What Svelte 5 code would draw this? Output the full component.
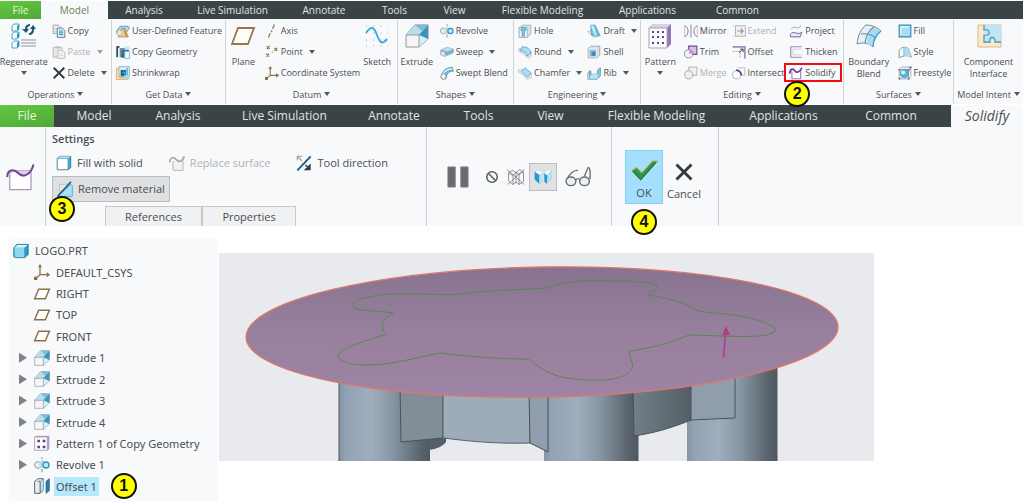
<script lang="ts">
	type Item = { label: string; icon: string; arrow?: boolean; disabled?: boolean; marked?: boolean };
	type Column = { size: number; large?: boolean; items: Item[] };
	type Group = { title: string; size: number; columns: Column[] };

	const mainTabs = [
		{ label: 'File', size: 41 },
		{ label: 'Model', size: 67 },
		{ label: 'Analysis', size: 72 },
		{ label: 'Live Simulation', size: 105 },
		{ label: 'Annotate', size: 78 },
		{ label: 'Tools', size: 63 },
		{ label: 'View', size: 57 },
		{ label: 'Flexible Modeling', size: 119 },
		{ label: 'Applications', size: 91 },
		{ label: 'Common', size: 89 },
		{ label: '', size: 241 }
	];

	const toolTabs = [
		{ label: 'File', size: 54 },
		{ label: 'Model', size: 80 },
		{ label: 'Analysis', size: 88 },
		{ label: 'Live Simulation', size: 125 },
		{ label: 'Annotate', size: 94 },
		{ label: 'Tools', size: 75 },
		{ label: 'View', size: 69 },
		{ label: 'Flexible Modeling', size: 143 },
		{ label: 'Applications', size: 111 },
		{ label: 'Common', size: 104 },
		{ label: 'Solidify', size: 80 }
	];

	const groups: Group[] = [
		{
			title: 'Operations', size: 112,
			columns: [
				{ size: 48, large: true, items: [{ label: 'Regenerate', icon: 'regenerate', arrow: true }] },
				{ size: 64, items: [
					{ label: 'Copy', icon: 'copy' },
					{ label: 'Paste', icon: 'paste', arrow: true, disabled: true },
					{ label: 'Delete', icon: 'cross', arrow: true }
				] }
			]
		},
		{
			title: 'Get Data', size: 114,
			columns: [
				{ size: 114, items: [
					{ label: 'User-Defined Feature', icon: 'udf' },
					{ label: 'Copy Geometry', icon: 'copyGeometry' },
					{ label: 'Shrinkwrap', icon: 'shrinkwrap' }
				] }
			]
		},
		{
			title: 'Datum', size: 172,
			columns: [
				{ size: 35, large: true, items: [{ label: 'Plane', icon: 'plane' }] },
				{ size: 97, items: [
					{ label: 'Axis', icon: 'axis' },
					{ label: 'Point', icon: 'point', arrow: true },
					{ label: 'Coordinate System', icon: 'csys' }
				] },
				{ size: 40, large: true, items: [{ label: 'Sketch', icon: 'sketch' }] }
			]
		},
		{
			title: 'Shapes', size: 116,
			columns: [
				{ size: 38, large: true, items: [{ label: 'Extrude', icon: 'extrude' }] },
				{ size: 78, items: [
					{ label: 'Revolve', icon: 'revolve' },
					{ label: 'Sweep', icon: 'sweep', arrow: true },
					{ label: 'Swept Blend', icon: 'sweptBlend' }
				] }
			]
		},
		{
			title: 'Engineering', size: 127,
			columns: [
				{ size: 70, items: [
					{ label: 'Hole', icon: 'hole' },
					{ label: 'Round', icon: 'round', arrow: true },
					{ label: 'Chamfer', icon: 'chamfer', arrow: true }
				] },
				{ size: 57, items: [
					{ label: 'Draft', icon: 'draft', arrow: true },
					{ label: 'Shell', icon: 'shell' },
					{ label: 'Rib', icon: 'rib', arrow: true }
				] }
			]
		},
		{
			title: 'Editing', size: 203,
			columns: [
				{ size: 39, large: true, items: [{ label: 'Pattern', icon: 'pattern', arrow: true }] },
				{ size: 48, items: [
					{ label: 'Mirror', icon: 'mirror' },
					{ label: 'Trim', icon: 'trim' },
					{ label: 'Merge', icon: 'merge', disabled: true }
				] },
				{ size: 58, items: [
					{ label: 'Extend', icon: 'extend', disabled: true },
					{ label: 'Offset', icon: 'offset' },
					{ label: 'Intersect', icon: 'intersect' }
				] },
				{ size: 58, items: [
					{ label: 'Project', icon: 'project' },
					{ label: 'Thicken', icon: 'thicken' },
					{ label: 'Solidify', icon: 'solidify', marked: true }
				] }
			]
		},
		{
			title: 'Surfaces', size: 110,
			columns: [
				{ size: 50, large: true, items: [{ label: 'Boundary Blend', icon: 'boundary' }] },
				{ size: 60, items: [
					{ label: 'Fill', icon: 'fill' },
					{ label: 'Style', icon: 'style' },
					{ label: 'Freestyle', icon: 'freestyle' }
				] }
			]
		},
		{
			title: 'Model Intent', size: 69,
			columns: [
				{ size: 69, large: true, items: [{ label: 'Component Interface', icon: 'component' }] }
			]
		}
	];

	const tree = [
		{ label: 'DEFAULT_CSYS', icon: 'csys' },
		{ label: 'RIGHT', icon: 'planeSmall' },
		{ label: 'TOP', icon: 'planeSmall' },
		{ label: 'FRONT', icon: 'planeSmall' },
		{ label: 'Extrude 1', icon: 'extrude', open: true },
		{ label: 'Extrude 2', icon: 'extrude', open: true },
		{ label: 'Extrude 3', icon: 'extrude', open: true },
		{ label: 'Extrude 4', icon: 'extrude', open: true },
		{ label: 'Pattern 1 of Copy Geometry', icon: 'patternSmall', open: true },
		{ label: 'Revolve 1', icon: 'revolve', open: true },
		{ label: 'Offset 1', icon: 'offsetFeature', selected: true }
	];

	// every icon is drawn on a 24x24 grid
	const icons: Record<string, string> = {
		regenerate: '<g fill="#f4fcff" stroke="#4aa6c8"><path d="M0 2l2-2h5v5l-2 2H0zM0 10l2-2h5v5l-2 2H0zM0 19l2-2h5v5l-2 2H0z"/></g><path d="M5 2v5l2-2V0zM5 10v5l2-2V8zM5 19v5l2-2v-5z" fill="#3995bb"/><path d="M9 16h15M9 19h15M9 22h15" stroke="#8f9295" stroke-width="1.2"/><g fill="none" stroke="#1d5673" stroke-width="2.2"><path d="M18 1c-3 0-4 2-4 5M17 10c3 0 4-2 4-5"/></g><path d="M10 5h7l-3 4zM18 5l3-4 3 4z" fill="#1d5673"/>',
		copy: '<path d="M2 2h9l3 3v11H2z" fill="#f5f8fa" stroke="#8d979e" stroke-width="1.5"/><path d="M4 7h6M4 10h6M4 13h6" stroke="#aab3b9"/><path d="M9 7h9l4 4v12H9z" fill="#d8effa" stroke="#5e7f92" stroke-width="1.6"/><path d="M12 12h7M12 15h7M12 18h7" stroke="#3187b2" stroke-width="1.6"/>',
		paste: '<path d="M2 4h15v17H2z" fill="#e6e7e8" stroke="#b6b8ba" stroke-width="1.6"/><path d="M6 2h7v4H6z" fill="#bfc1c3"/><path d="M10 9h8l4 4v10H10z" fill="#f4f4f4" stroke="#b9bbbd" stroke-width="1.6"/><path d="M13 14h6M13 18h6" stroke="#c5c7c9"/>',
		cross: '<path d="M3 3l18 18M21 3L3 21" stroke="#35393c" stroke-width="3.4" fill="none"/>',
		udf: '<path d="M1 12l6-8h14l2 3-6 8H1z" fill="#a8daf1" stroke="#3f86aa" stroke-width="1.3"/><path d="M4 22l6-14h5l6 14z" fill="#f1d3a0" stroke="#ad7e3c" stroke-width="1.5"/><path d="M12 8l4 14h5l-6-14z" fill="#d29a4c"/><circle cx="6" cy="15" r="5" fill="#eee5d6" stroke="#9c968b"/>',
		copyGeometry: '<path d="M2 2v19M2 3h4" stroke="#24506b" stroke-width="3"/><path d="M7 6h8v14H7z" fill="#8fa0a9" stroke="#4d5d66"/><path d="M9 8h13v4h-6v10H9z" fill="#2f6d94"/><path d="M15 11h8v12h-8z" fill="#f8fbfd" stroke="#71b4d5" stroke-width="1.5"/><path d="M15 3h8v5h-8z" fill="#b9e5f7"/>',
		shrinkwrap: '<path d="M1 4h5v16h14v3H1z" fill="#fae8bf" stroke="#dda24c" stroke-width="1.5"/><path d="M5 1h18v17H5z" fill="#d5ecf5" stroke="#8ca6b3" stroke-width="1.3"/><path d="M8 7h9v10H8z" fill="#176390"/><path d="M11 11h4v4M19 4v12" stroke="#45a9d3" stroke-width="2.4" fill="none"/><path d="M14 16h9v7h-9z" fill="#9bdaf1"/>',
		plane: '<path d="M7 4h16l-6 16H1z" fill="#fffdf8" stroke="#957749" stroke-width="1.8"/>',
		planeSmall: '<path d="M7 5h16l-6 14H1z" fill="#fff" stroke="#8d704a" stroke-width="2.2"/>',
		axis: '<path d="M16 1l-3 7M12 11l-1 3M9 16l-3 7" stroke="#92754f" stroke-width="2.2" fill="none"/>',
		point: '<path d="M3 2l5 5M8 2L3 7M16 5l5 5M21 5l-5 5M2 15l5 5M7 15l-5 5M12 12l1 1" stroke="#92754f" stroke-width="2.2"/>',
		csys: '<path d="M9 2v14l-7 6M9 16h14" stroke="#927447" stroke-width="2" fill="none"/><path d="M6 5l3-5 3 5zM19 12l5 4-5 4zM0 19l5 0v5H0z" fill="#8a6d44"/>',
		sketch: '<path d="M1 2h22M1 9h22M1 16h22M1 22h22" stroke="#9b9da0" stroke-dasharray="1 6.2"/><path d="M1 9C6 1 9 3 12 11s5 10 10 4" stroke="#3aaee0" stroke-width="2" fill="none"/>',
		extrude: '<path d="M1 11L10 1h13v14L14 23z" fill="#9fcfe5" stroke="#78858d"/><path d="M10 1h13L14 11H1z" fill="#bdddea"/><path d="M23 1v14l-9 8V11z" fill="#67abcb"/><path d="M14 11l9-10v14z" fill="#3f92bb"/><path d="M14 23l9-8-9-4z" fill="#d3effa"/><path d="M10 1h13l-6 6z" fill="#7cbbd6"/><path d="M1 11h13v12H1z" fill="#f4f5f5" stroke="#929a9f"/>',
		revolve: '<path d="M12 0v3m0 2v4m0 2v5m0 2v5" stroke="#858c91" stroke-width="1.6"/><ellipse cx="6" cy="12" rx="5" ry="5" fill="#edf1f3" stroke="#8c989f" stroke-width="1.5"/><path d="M7 7c5 0 6-1 10-1v11c-4 0-5-1-10 0z" fill="#c2e2ef" opacity=".7"/><circle cx="18" cy="12" r="4.5" fill="#bbe9fb" stroke="#2f94c0" stroke-width="2"/>',
		sweep: '<path d="M2 8l10-4 11 3v6l-11 5-10-4z" fill="#75b5d1" stroke="#769aaa"/><path d="M2 8l10-4 11 3-10 4z" fill="#bcdbe7"/><path d="M1 10l8 2v8l-8-3z" fill="#dce3e6" stroke="#85939a"/>',
		sweptBlend: '<path d="M2 20C3 8 10 3 21 2l2 7C14 9 12 13 10 22z" fill="#73bddd" stroke="#43758e"/><path d="M5 14c4-7 9-9 16-9" stroke="#eefbff" stroke-width="2" fill="none"/><ellipse cx="6" cy="18" rx="4.5" ry="5" fill="#f2f4f5" stroke="#748087" stroke-width="1.4"/>',
		hole: '<path d="M2 6l7-4h13v15l-6 6H2z" fill="#cce6f0" stroke="#83939c"/><path d="M2 6h14v17H2z" fill="#f3f5f6" stroke="#839aa6"/><path d="M5 8c2-3 7-3 9 0v3h-3v10H7V11H5z" fill="#74c9ec" stroke="#398cad"/>',
		round: '<path d="M1 6h9l13 5v8l-6 4-7-7-9-5z" fill="#dce0e2" stroke="#b7bec2"/><path d="M7 3c9 0 15 4 15 11l-7 5c0-6-4-9-11-9z" fill="#a7def5" stroke="#519fc2" stroke-width="1.3"/>',
		chamfer: '<path d="M1 6h10l12 8v6l-8 3-6-7-8-5z" fill="#e0e4e6" stroke="#b7bec2"/><path d="M12 3l11 9-7 7L6 9z" fill="#a7def5" stroke="#519fc2" stroke-width="1.3"/>',
		draft: '<path d="M1 13l9-3 13 10-12 3z" fill="#e1e4e5" stroke="#a3acb1"/><path d="M6 2h8l8 17-5 2-9-2z" fill="#65c0e5" stroke="#4387a7"/><path d="M6 2l7 17 4 2-5-17z" fill="#c6eefc"/>',
		shell: '<path d="M2 6l5-4h15v15l-5 5H2z" fill="#d9e0e3" stroke="#8a969d" stroke-width="1.3"/><path d="M3 6h14v15H3z" fill="#eef1f2"/><path d="M5 9h10v10H5z" fill="#348db4" stroke="#9cbcc9"/><path d="M5 9h10l-3 3H8v7H5z" fill="#7bbddb"/>',
		rib: '<path d="M1 12l6-4v11h10v4H1z" fill="#dadfe1" stroke="#939da2"/><path d="M4 8l3 7 11-2V7l5-4v14l-5 5H4z" fill="#85cae7" stroke="#407f9c"/><path d="M7 15l11-2v9H4z" fill="#b6e7f8"/>',
		pattern: '<path d="M1 4l4-4h18v20l-4 4H1z" fill="#9674b5"/><path d="M1 4l4-4h18l-4 4z" fill="#dbd0e5"/><path d="M1 4h18v20H1z" fill="#fdfcff" stroke="#a3a6ab"/><g fill="#67418f"><path d="M4 7h2v2H4zM9 7h2v2H9zM14 7h2v2h-2zM4 12h2v2H4zM9 12h2v2H9zM14 12h2v2h-2zM4 18h2v2H4zM9 18h2v2H9zM14 18h2v2h-2z"/></g>',
		patternSmall: '<path d="M1 3l2-2h20v20l-2 2H1z" fill="#b795d3"/><path d="M1 3h19v20H1z" fill="#fdfcff" stroke="#a2a4a7" stroke-width="1.3"/><path d="M5 7h4v4H5zM13 7h4v4h-4zM5 16h4v4H5zM13 16h4v4h-4z" fill="#68418f"/>',
		mirror: '<path d="M1 3c8 2 8 16 0 19M23 3c-8 2-8 16 0 19" fill="none" stroke="#9068ac" stroke-width="1.6"/><path d="M1 3v19M23 3v19" stroke="#c0a8d1" stroke-width="1.2"/><path d="M12 1v22" stroke="#777" stroke-width="1.5"/>',
		trim: '<path d="M8 2h14v14H8z" fill="#d5c2e4" stroke="#74498e" stroke-width="2"/><circle cx="8" cy="15" r="7" fill="#f4f4f5" stroke="#8f9295" stroke-width="1.7"/><path d="M9 8a7 7 0 016 7H9z" fill="#b99acd"/>',
		merge: '<path d="M8 2h14v14H8z" fill="#f1f1f1" stroke="#bdbebf" stroke-width="2"/><circle cx="8" cy="15" r="7" fill="#f0f0f0" stroke="#b7b8b9" stroke-width="2"/>',
		extend: '<path d="M6 3h17v18H6z" fill="#f0f0f0" stroke="#afb1b2" stroke-width="1.6"/><path d="M9 12h10M15 8l4 4-4 4" fill="none" stroke="#8f9192" stroke-width="2"/><path d="M1 3h5M1 21h5" stroke="#ccc"/>',
		offset: '<path d="M1 3h21v20" fill="none" stroke="#a888bd" stroke-width="3"/><path d="M1 11h13v12" fill="none" stroke="#97999b" stroke-width="1.5" stroke-dasharray="3 2"/><path d="M12 13l7-6M14 7h5v5" fill="none" stroke="#35383a" stroke-width="1.6"/>',
		intersect: '<path d="M10 3h12v13h-7" fill="none" stroke="#b5b7b9" stroke-width="1.5"/><circle cx="8" cy="15" r="7" fill="#fff" stroke="#a2a5a8" stroke-width="1.4"/><path d="M7 7c5 0 9 4 9 9" stroke="#62347f" stroke-width="2.8" fill="none"/>',
		project: '<path d="M4 9c6-9 8 3 17-6" stroke="#9a9d9f" stroke-width="1.6" fill="none"/><path d="M2 18c7-9 11 3 20-4l-3 8H3z" fill="#eee6f5" stroke="#8260a0" stroke-width="1.7"/>',
		thicken: '<path d="M22 3H3v18h19" stroke="#a78abc" stroke-width="2" fill="none"/><path d="M22 7H7v10h15" stroke="#c5c0ca" stroke-width="1.3" fill="none"/>',
		solidify: '<path d="M5 8v14h15V7" fill="#fff" stroke="#9b7bb4" stroke-width="1.8"/><path d="M1 13C2 4 7 4 10 8s8 4 12-5" fill="none" stroke="#64378a" stroke-width="2.8"/>',
		solidifyLarge: '<path d="M3 7h17v15H3z" fill="#fff" stroke="#ad92bf" stroke-width="1"/><path d="M3 7h17l-5 5c-4 1-4-4-9-4l-3 2z" fill="#dad2e4"/><path d="M1 12C1 6 6 5 10 9s10 1 12-7" fill="none" stroke="#704493" stroke-width="1.6"/>',
		boundary: '<path d="M0 20C1 11 4 5 9 1c6 0 10 2 15 6-5 4-8 10-8 16-5-4-10-5-16-3z" fill="#e3f1f8" stroke="#75868f"/><path d="M17 4l7 3c-5 4-8 10-8 16l-6-3C10 13 12 8 17 4z" fill="#a5dcf3"/><path d="M4 10c6-1 11 1 15 4M8 19C9 12 12 6 17 3" fill="none" stroke="#5d8ca3" stroke-width="1.2"/><path d="M24 7c-5 4-8 10-8 16" fill="none" stroke="#3a9cc8" stroke-width="1.3"/>',
		fill: '<path d="M2 2h20v20H2z" fill="#a9def2" stroke="#3a89ae" stroke-width="2"/><path d="M5 19V5h14" fill="none" stroke="#e3f7fe" stroke-width="2"/>',
		style: '<path d="M2 9C7 2 14 3 18 6l5 15c-7-4-13-3-21 1z" fill="#f2f9fc" stroke="#6e7e87" stroke-width="1.3"/><path d="M10 5c4-1 6 0 8 1l5 15c-4-2-7-3-13-2z" fill="#a9dff5"/><path d="M10 5v14" stroke="#7397a8"/>',
		freestyle: '<path d="M2 6l4-4h16v16l-4 4H2zM2 6h16v16M18 6l4-4" fill="none" stroke="#899399" stroke-width="1.3"/><circle cx="11" cy="13" r="7" fill="#54b4dc" stroke="#2f7b9e"/><circle cx="9" cy="11" r="3.500" fill="#d6f5ff"/><path d="M1 5h3v3H1zM17 5h3v3h-3zM1 20h3v3H1zM17 20h3v3h-3zM20 1h3v3h-3z" fill="#596d78"/>',
		component: '<path d="M1 1h23v22H1z" fill="#fde9c6" stroke="#d9b987"/><path d="M7 1h17v18h-6c2-4-4-5-4 0H7v-6c5 2 5-5 0-3z" fill="#bfe6f6"/><path d="M7 1v5c7-2 7 7 0 5v7h6c-2-6 6-6 5 0h6" fill="none" stroke="#4a9dbd" stroke-width="1.3"/>',
		solid: '<path d="M2 5l4-3h16v17l-4 3H2z" fill="#4fadd2" stroke="#286e8e" stroke-width="1.4"/><path d="M2 5h16v17H2z" fill="#fff" stroke="#3989ac"/><path d="M2 5l4-3h16l-4 3z" fill="#a9dff3"/>',
		replace: '<path d="M6 9v14h15V8" fill="#f2f2f2" stroke="#b6b8b9" stroke-width="1.5"/><path d="M1 11C2 2 7 3 11 7s8 4 12-5" fill="none" stroke="#a5a7a9" stroke-width="2.5"/>',
		direction: '<path d="M2 23L22 2" stroke="#1f618b" stroke-width="3"/><path d="M2 8V2h7M2 2l7 7" stroke="#a5a7a9" stroke-width="2" fill="none"/><path d="M21 15v7h-7zM14 15l6 6" fill="#35393b" stroke="#35393b" stroke-width="2"/>',
		remove: '<path d="M4 5h17v17H4z" fill="#e9e9e9" stroke="#aeb0b1"/><path d="M1 23L21 5l2 2v16z" fill="#a4e2fb" stroke="#3e91b7"/><path d="M1 23L21 1" stroke="#17567e" stroke-width="2.4"/>',
		pause: '<path d="M1 1h8v22H1zM15 1h8v22h-8z" fill="#6b686e" stroke="#858288"/>',
		ban: '<circle cx="12" cy="12" r="9" fill="none" stroke="#5a5e60" stroke-width="2.600"/><path d="M6 6l12 12" stroke="#5a5e60" stroke-width="2.600"/>',
		wire: '<path d="M2 7l5-4 5 3 5-4 5 4v12l-6 4-4-3-5 3-5-5zM2 7l6 3v12M8 10l4-4v14M16 8v14M16 8l6-3M12 6l4 2M0 2l23 20M1 22L23 2" stroke="#6d7275" stroke-width="1" fill="none"/>',
		preview: '<path d="M1 5l6-2 5 4v10l-5 4-6-6zM14 7l3-4h6v11l-6 7-3-3z" fill="#51b0dc"/><path d="M1 5l6 4v12l-6-6zM14 7l4 3-1 11-3-3z" fill="#2b96cb"/><path d="M1 5l6-2 5 4-5 2zM14 7l3-4h6l-5 7z" fill="#fff"/><path d="M7 9l5-2v10l-5 4zM18 10l5-7v11l-6 7z" fill="#b5e2f4"/>',
		glasses: '<path d="M1 15C5 8 8 5 12 6M18 11l3-7c1-2 3 0 2 10" fill="none" stroke="#6e7274" stroke-width="1.3"/><ellipse cx="5.500" cy="16" rx="4.500" ry="4" fill="#e6f1f5" stroke="#686c6e" stroke-width="1.3"/><ellipse cx="18" cy="16" rx="4.500" ry="4" fill="#e6f1f5" stroke="#686c6e" stroke-width="1.3"/><path d="M10 15c1-2 3-2 4 0" fill="none" stroke="#686c6e"/>',
		check: '<path d="M1 13l4-3 5 5L20 4h4L9 21z" fill="#299653" stroke="#8ca629" stroke-width="1"/><path d="M2 13l7 8L23 5" fill="none" stroke="#17713e" stroke-width="1"/>',
		part: '<path d="M1 7l5-5h17v15l-5 5H3l-2-2z" fill="#2b9aca" stroke="#31718e"/><path d="M2 7h15v14H3z" fill="#8dd9f4"/><path d="M2 7l5-4h15l-5 4z" fill="#d6f5ff"/>',
		offsetFeature: '<path d="M1 5l5-4h7v18l-4 4H1z" fill="#e9edef" stroke="#4b5256" stroke-width="1.3"/><path d="M5 5h4v18" fill="none" stroke="#687177" stroke-width="1.3"/><path d="M10 5l4-4v17l-4 4z" fill="#d3f0fb" stroke="#277394"/><path d="M18 5l5-4v18l-5 4z" fill="#2c7faa" stroke="#205a79"/>'
	};

	const tracks = (parts: { size: number }[]) =>
		parts.map((part) => `minmax(0, ${part.size}fr)`).join(' ');
</script>

{#snippet icon(name: string)}
	<svg class="icon" viewBox="0 0 24 24" aria-hidden="true">{@html icons[name]}</svg>
{/snippet}

<div class="page">
	<nav class="tabs" style="grid-template-columns: {tracks(mainTabs)}">
		{#each mainTabs as tab}
			{#if tab.label}
				<button class:file={tab.label === 'File'} class:active={tab.label === 'Model'}>{tab.label}</button>
			{/if}
		{/each}
	</nav>

	<section class="ribbon" style="grid-template-columns: {tracks(groups)}">
		{#each groups as group (group.title)}
			<div class="group">
				<div class="columns" style="grid-template-columns: {tracks(group.columns)}">
					{#each group.columns as column}
						<div class="column">
							{#each column.items as item (item.label)}
								<button
									class={column.large ? 'large' : 'small'}
									class:marked={item.marked}
									disabled={item.disabled}>
									{@render icon(item.icon)}
									<span>{item.label}</span>
									{#if item.arrow}<i class="arrow"></i>{/if}
									{#if item.marked}<b class="badge step-two">2</b>{/if}
								</button>
							{/each}
						</div>
					{/each}
				</div>
				<button class="title">{group.title}<i class="arrow"></i></button>
			</div>
		{/each}
	</section>

	<nav class="tabs tool-tabs" style="grid-template-columns: {tracks(toolTabs)}">
		{#each toolTabs as tab}
			<button class:file={tab.label === 'File'} class:current={tab.label === 'Solidify'}>{tab.label}</button>
		{/each}
	</nav>

	<section class="dashboard">
		<div class="feature">{@render icon('solidifyLarge')}</div>
		<div class="settings">
			<h2>Settings</h2>
			<div class="options">
				<button class="option">{@render icon('solid')}Fill with solid</button>
				<button class="option" disabled>{@render icon('replace')}Replace surface</button>
				<button class="option">{@render icon('direction')}Tool direction</button>
			</div>
			<button class="option pressed">
				{@render icon('remove')}Remove material
				<b class="badge step-three">3</b>
			</button>
			<div class="panels">
				<button>References</button>
				<button>Properties</button>
			</div>
		</div>
		<div class="controls">
			<button class="pause" aria-label="Pause">{@render icon('pause')}</button>
			<button class="ban" aria-label="No preview">{@render icon('ban')}</button>
			<button class="wire" aria-label="Unattached">{@render icon('wire')}</button>
			<button class="preview" aria-label="Attached">{@render icon('preview')}</button>
			<button class="glasses" aria-label="Verify">{@render icon('glasses')}</button>
		</div>
		<div class="confirm">
			<button class="ok">{@render icon('check')}OK<b class="badge step-four">4</b></button>
			<button class="cancel">{@render icon('cross')}Cancel</button>
		</div>
	</section>

	<main>
		<ul class="tree">
			<li class="root">{@render icon('part')}<span>LOGO.PRT</span></li>
			{#each tree as node (node.label)}
				<li>
					<i class="expander" class:visible={node.open}></i>
					{@render icon(node.icon)}
					<span class:selected={node.selected}>{node.label}</span>
					{#if node.selected}<b class="badge">1</b>{/if}
				</li>
			{/each}
		</ul>

		<svg class="scene" viewBox="219 253 655 208" role="img" aria-label="Model">
			<defs>
				<linearGradient id="leg">
					<stop offset="0" stop-color="#8594a3" />
					<stop offset=".08" stop-color="#93a3b3" />
					<stop offset=".35" stop-color="#9fadbd" />
					<stop offset=".6" stop-color="#8695a3" />
					<stop offset=".9" stop-color="#59636c" />
					<stop offset="1" stop-color="#505960" />
				</linearGradient>
				<linearGradient id="ring">
					<stop offset="0" stop-color="#737f88" />
					<stop offset="1" stop-color="#545f66" />
				</linearGradient>
				<linearGradient id="top" x1=".55" y1="0" x2=".45" y2="1">
					<stop offset="0" stop-color="#87738f" />
					<stop offset=".45" stop-color="#967f9c" />
					<stop offset="1" stop-color="#9f84a5" />
				</linearGradient>
			</defs>
			<rect x="219" y="253" width="655" height="208" fill="#e8eaed" />
			<path d="M428 436h18v6c-3 4-9 7-17 8z" fill="#555f69" />
			<path d="M339 375h91v86h-91z" fill="url(#leg)" />
			<path d="M339 380v81" stroke="#4f5961" />
			<path d="M400 385h43v53l-42 4z" fill="#818d97" stroke="#49525a" />
			<path d="M443 390h87v53c-36 1-62-2-87-5z" fill="#9dabba" stroke="#566169" />
			<path d="M544 390h94v71h-94z" fill="url(#leg)" />
			<path d="M529 390h19v62l-18-9z" fill="#909dad" stroke="#465058" />
			<path d="M687 365h90v96h-90z" fill="url(#leg)" />
			<path d="M777 365v96M638 436v25" stroke="#4f5961" />
			<path d="M633 385h58v35c-17 7-36 13-57 16z" fill="url(#ring)" stroke="#49525a" />
			<path d="M691 375h44v43l-44 2z" fill="#909daa" stroke="#4a545c" />
			<ellipse cx="542" cy="332" rx="296" ry="65" transform="rotate(-1 542 332)" fill="url(#top)" stroke="#dc7869" stroke-width="1.3" />
			<path
				d="M393 313c-17-3-35-1-39-6-5-6 12-10 25-12 25-3 60 1 84-1 24-4 55-4 85-6 18-7 38-8 60-7 22 0 42 1 48 4 4 3-3 7-8 10 18 3 35 6 50 16 20 3 42 3 59 9 13 4 22 8 17 12-9 7-43 4-85 3-18 7-35 13-60 16 1 8 5 13 3 17-4 10-24 13-42 12-36-1-44-8-62-21-29 0-57-2-87-6-24 4-47 12-76 12-22 0-34-8-22-15 11-6 29-11 43-16-6-7-5-14 7-21z"
				fill="none"
				stroke="#5a874f" />
			<path d="M723.500 358l2-24" stroke="#b03c92" stroke-width="1.500" />
			<path d="M722 335l4-9 4 9z" fill="#b03c92" />
		</svg>
	</main>
</div>

<style>
	:global(body) {
		margin: 0;
		background: #fff;
	}

	.page {
		min-height: 100vh;
		display: flex;
		flex-direction: column;
		font: 9px/12px 'Open Sans', 'Noto Sans', sans-serif;
		color: #4a4e52;
	}

	button {
		margin: 0;
		padding: 0;
		border: 0;
		background: none;
		color: inherit;
		font: inherit;
		white-space: nowrap;
	}

	button:disabled {
		color: #b0b2b4;
	}

	.icon {
		flex: none;
		display: block;
		width: 14px;
		height: 14px;
		overflow: visible;
	}

	.tabs {
		display: grid;
		height: 18px;
		margin-top: 1px;
		background: #3a4345;
		font-size: 10px;
	}

	.tabs button {
		color: #e0e3e3;
	}

	.tabs .file {
		background: linear-gradient(165deg, #64c840, #4fa838);
		color: #e7f8dc;
	}

	.tabs .active {
		background: #f8f9fb;
		color: #668456;
	}

	.tool-tabs {
		height: 22px;
		font-size: 12px;
	}

	.tool-tabs .current {
		margin-left: 8px;
		background: #f8f9fb;
		color: #4a4e52;
		font-size: 14px;
		font-style: italic;
	}

	.ribbon {
		display: grid;
		padding: 1px 0 0;
		background: #f8f9fb;
	}

	.group {
		display: flex;
		flex-direction: column;
		border-right: 1px solid #d0d2d4;
	}

	.group:last-child {
		border-right: 0;
	}

	.columns {
		display: grid;
		height: 63px;
	}

	.column {
		display: flex;
		flex-direction: column;
		align-items: flex-start;
	}

	.small {
		position: relative;
		display: flex;
		align-items: center;
		gap: 2px;
		height: 21px;
		padding-left: 4px;
	}

	.small .arrow {
		margin-left: 4px;
	}

	.marked::before {
		content: '';
		position: absolute;
		inset: 1px -6px 1px -1px;
		border: 2px solid #f00d14;
	}

	.large {
		display: flex;
		flex-direction: column;
		align-items: center;
		align-self: stretch;
		padding-top: 4px;
		white-space: normal;
	}

	.large .icon {
		width: 24px;
		height: 24px;
		margin-bottom: 8px;
	}

	.large .arrow {
		margin-top: 3px;
	}

	.title {
		height: 18px;
		margin-top: 3px;
	}

	.arrow {
		display: inline-block;
		border: 3px solid transparent;
		border-top: 4px solid #54585b;
		border-bottom: 0;
	}

	.title .arrow {
		margin: 0 0 2px 3px;
	}

	:disabled .arrow {
		border-top-color: #a0a2a4;
	}

	.badge {
		flex: none;
		box-sizing: border-box;
		width: 26px;
		height: 26px;
		border: 2px solid #111;
		border-radius: 50%;
		background: #ff0;
		color: #111;
		font: bold 16px/22px 'Liberation Sans', sans-serif;
		text-align: center;
		z-index: 1;
	}

	.step-two,
	.step-three,
	.step-four {
		position: absolute;
	}

	.step-two {
		top: 19px;
		left: -1px;
	}

	.dashboard {
		display: grid;
		grid-template-columns: minmax(0, 46fr) minmax(0, 381fr) minmax(0, 185fr) minmax(0, 107fr) minmax(0, 304fr);
		height: 99px;
		background: #f8f9fb;
		font-size: 11px;
	}

	.dashboard > div {
		border-right: 1px solid #cdd0d2;
	}

	.dashboard > .feature {
		display: flex;
		align-items: center;
		justify-content: center;
		padding-right: 4px;
	}

	.feature .icon {
		width: 30px;
		height: 30px;
	}

	.settings {
		display: flex;
		flex-direction: column;
		align-items: flex-start;
		padding-left: 6px;
	}

	h2 {
		margin: 5px 0 3px;
		font: 600 11px/14px 'Open Sans', 'Noto Sans', sans-serif;
	}

	.options {
		display: flex;
		gap: 18px;
		height: 27px;
	}

	.option {
		position: relative;
		display: flex;
		align-items: center;
		gap: 5px;
		padding: 0 4px;
	}

	.option .icon {
		width: 16px;
		height: 16px;
	}

	.pressed {
		height: 26px;
		border: 1px solid #b9bbbd;
		background: #dfe0e2;
	}

	.step-three {
		top: 19px;
		left: -4px;
	}

	.panels {
		display: flex;
		margin: auto 0 0 53px;
	}

	.panels button {
		width: 97px;
		height: 20px;
		border: 1px solid #c5c7c9;
		border-bottom: 0;
		background: #f0f1f3;
	}

	.panels button + button {
		width: 94px;
	}

	.controls {
		display: flex;
		align-items: center;
		gap: 8px;
		padding-left: 20px;
	}

	.pause .icon {
		width: 22px;
		height: 22px;
	}

	.ban {
		margin-left: 8px;
	}

	.wire .icon,
	.preview .icon {
		width: 18px;
		height: 18px;
	}

	.wire {
		margin-right: -4px;
	}

	.preview {
		padding: 4px;
		border: 1px solid #bbbdbf;
		background: #dfe1e3;
	}

	.glasses .icon {
		width: 26px;
		height: 26px;
	}

	.confirm {
		display: flex;
		align-items: center;
		gap: 4px;
		padding-left: 13px;
	}

	.ok,
	.cancel {
		position: relative;
		display: flex;
		flex-direction: column;
		align-items: center;
		justify-content: flex-end;
		gap: 6px;
		box-sizing: border-box;
		height: 54px;
		padding-bottom: 4px;
	}

	.ok {
		width: 38px;
		border: 1px solid #8bcff0;
		background: #a4e0fd;
	}

	.ok .icon {
		width: 26px;
		height: 26px;
		margin-bottom: -2px;
	}

	.cancel .icon {
		width: 20px;
		height: 20px;
	}

	.step-four {
		top: 58px;
		left: 5px;
	}

	main {
		flex: 1;
		display: grid;
		grid-template-columns: minmax(0, 209fr) minmax(0, 655fr) minmax(0, 148fr);
		gap: 0 1px;
		padding: 13px 0 0 9px;
	}

	.tree {
		display: grid;
		grid-auto-rows: 1fr;
		margin: 0;
		padding: 1px 0 4px;
		background: #f8f9fb;
		font-family: 'Noto Sans', 'Open Sans', sans-serif;
		font-size: 11px;
		list-style: none;
	}

	.tree li {
		display: flex;
		align-items: center;
		padding-left: 10px;
		white-space: nowrap;
	}

	.tree .root {
		padding-left: 4px;
	}

	.tree .icon {
		width: 16px;
		height: 16px;
	}

	.tree span {
		padding: 0 2px;
		margin-left: 4px;
		line-height: 19px;
	}

	.tree .selected {
		background: #b5e7fd;
	}

	.tree .badge {
		margin: -3px 0 -3px 12px;
	}

	.expander {
		width: 8px;
		height: 10px;
		margin-right: 7px;
	}

	.expander.visible {
		background: #808386;
		clip-path: polygon(0 0, 100% 50%, 0 100%);
	}

	.scene {
		display: block;
		width: 100%;
		margin-top: 14px;
	}
</style>
